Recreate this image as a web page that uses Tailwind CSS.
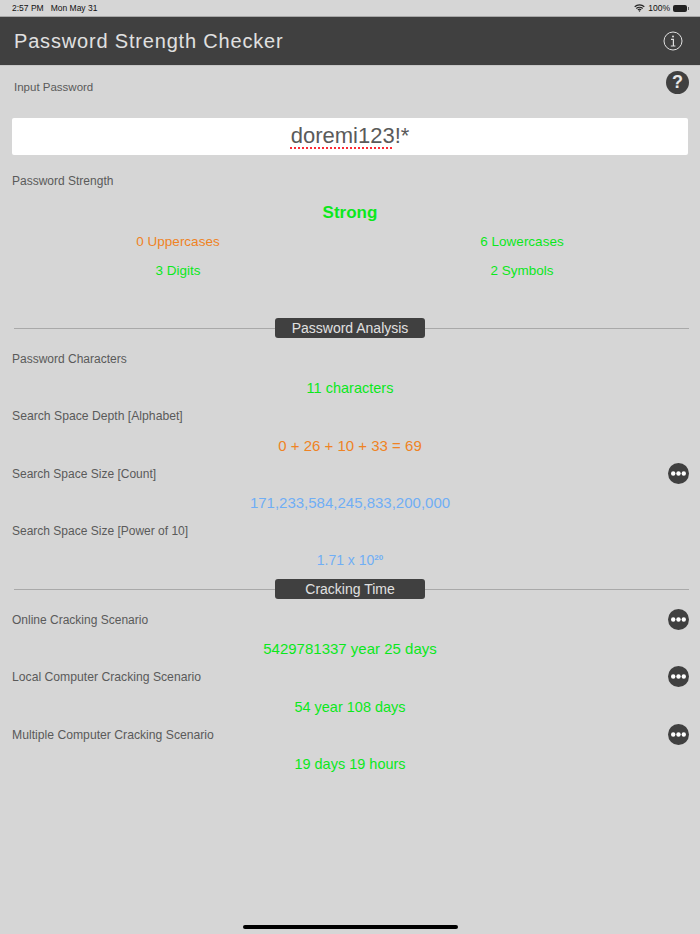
<!DOCTYPE html>
<html lang="en">
<head>
  <meta charset="UTF-8">
  <meta name="viewport" content="width=device-width, initial-scale=1.0">
  <title>Password Strength Checker</title>
  <script src="https://cdn.jsdelivr.net/npm/@tailwindcss/browser@4"></script>
</head>
<body class="bg-[#d6d6d6] text-[#5a5a5a] font-['Liberation_Sans',Arial,sans-serif] w-[700px] h-[934px] overflow-hidden relative">
  <!-- Status bar -->
  <div class="h-[17px] flex items-center justify-between pl-[12px] pr-[11px] text-[8.5px] font-medium text-[#111111] border-b border-[#a8a8a8]">
    <div class="flex gap-[7px]"><span>2:57 PM</span><span>Mon May 31</span></div>
    <div class="flex items-center gap-[3px]">
      <svg width="11" height="8" viewBox="0 0 11 8" fill="none" stroke="#222" stroke-width="1.2">
        <path d="M.7 2.8a7 7 0 0 1 9.6 0M2.3 4.5a4.7 4.7 0 0 1 6.4 0M3.9 6a2.3 2.3 0 0 1 3.2 0"/>
        <circle cx="5.5" cy="7" r=".7" fill="#222" stroke="none"/>
      </svg>
      <span>100%</span>
      <div class="flex items-center gap-px">
        <div class="w-[14px] h-[7px] bg-[#222222] rounded-[2px]"></div>
        <div class="w-px h-[3px] bg-[#666666]"></div>
      </div>
    </div>
  </div>

  <!-- Nav bar -->
  <header class="h-[49px] bg-[#404040] flex items-center justify-between pl-[14px] pr-[17px] border-b border-[#c8c8c8]">
    <h1 class="text-[20px] tracking-[0.82px] text-[#e0e0e0]">Password Strength Checker</h1>
    <svg width="20" height="20" viewBox="0 0 20 20" fill="none" stroke="#e0e0e0">
      <circle cx="10" cy="10" r="9" stroke-width="1"/>
      <circle cx="10" cy="5.6" r="1" fill="#e0e0e0" stroke="none"/>
      <path d="M8 8.4h2.4v6.4M7.8 15h4.6" stroke-width="1.2"/>
    </svg>
  </header>

  <main class="flex flex-col">
    <div class="h-[41px] flex items-center justify-between pl-[14px] pr-[11px] text-[11.5px]">
      <span class="pt-[2px]">Input Password</span>
      <div class="w-[23px] h-[23px] rounded-full bg-[#404040] text-[#e8e8e8] text-[18px] font-bold flex items-center justify-center -mt-[8px]">?</div>
    </div>

    <div class="mx-[12px] h-[37px] mt-[11px] pb-[2px] bg-white rounded-[2px] flex items-center justify-center text-[22px]">
      <span class="underline decoration-dotted decoration-red-500 decoration-[1.5px] underline-offset-[4px]">doremi123</span><span>!*</span>
    </div>

    <div class="h-[26px] mt-[13px] pl-[12px] flex items-center text-[12px]">Password Strength</div>
    <div class="h-[30px] mt-[3px] pt-[2px] flex items-center justify-center text-[17px] font-bold text-[#0be81c]">Strong</div>
    <div class="grid grid-cols-2 auto-rows-[29px] items-center text-center text-[13.5px] px-[6px] pt-[1px]">
      <span class="text-[#ef8324]">0 Uppercases</span>
      <span class="text-[#0be81c]">6 Lowercases</span>
      <span class="text-[#0be81c]">3 Digits</span>
      <span class="text-[#0be81c]">2 Symbols</span>
    </div>

    <!-- Password Analysis -->
    <div class="h-[20px] mt-[32px] relative flex justify-center">
      <div class="absolute left-[14px] right-[11px] top-[10px] h-px bg-[#a9a9a9]"></div>
      <div class="relative w-[150px] h-[20px] rounded-[3px] bg-[#404040] text-[#e0e0e0] text-[14px] flex items-center justify-center">Password Analysis</div>
    </div>

    <div class="h-[28px] mt-[6px] pt-[2px] pl-[12px] flex items-center text-[12px]">Password Characters</div>
    <div class="h-[29.5px] pt-[4px] flex items-center justify-center text-[14.5px] text-[#0be81c]">11 characters</div>

    <div class="h-[28px] pt-[1px] pl-[12px] flex items-center text-[12.2px]">Search Space Depth [Alphabet]</div>
    <div class="h-[29.5px] pt-[3.5px] flex items-center justify-center text-[15px] text-[#ef8324]">0 + 26 + 10 + 33 = 69</div>

    <div class="h-[28px] pl-[12px] pr-[11px] flex items-center justify-between text-[12px]">
      <span class="pt-[2px]">Search Space Size [Count]</span>
      <svg width="21" height="21" viewBox="0 0 21 21"><circle cx="10.5" cy="10.5" r="10.5" fill="#404040"/><circle cx="5.2" cy="10.5" r="2.2" fill="#fff"/><circle cx="10.5" cy="10.5" r="2.2" fill="#fff"/><circle cx="15.8" cy="10.5" r="2.2" fill="#fff"/></svg>
    </div>
    <div class="h-[29.5px] pt-[2.5px] flex items-center justify-center text-[15px] text-[#70aef5]">171,233,584,245,833,200,000</div>

    <div class="h-[28px] pl-[12px] flex items-center text-[12px]">Search Space Size [Power of 10]</div>
    <div class="h-[29.5px] pt-[2.5px] flex items-center justify-center text-[14px] text-[#70aef5]"><span>1.71 x 10<sup class="text-[8px] font-bold -top-[5px]">20</sup></span></div>

    <!-- Cracking Time -->
    <div class="h-[20px] mt-[5px] relative flex justify-center">
      <div class="absolute left-[14px] right-[11px] top-[10px] h-px bg-[#a9a9a9]"></div>
      <div class="relative w-[150px] h-[20px] rounded-[3px] bg-[#404040] text-[#e0e0e0] text-[14px] flex items-center justify-center">Cracking Time</div>
    </div>

    <div class="h-[28px] mt-[6px] pl-[12px] pr-[11px] flex items-center justify-between text-[12px]">
      <span class="pt-[2px]">Online Cracking Scenario</span>
      <svg width="21" height="21" viewBox="0 0 21 21"><circle cx="10.5" cy="10.5" r="10.5" fill="#404040"/><circle cx="5.2" cy="10.5" r="2.2" fill="#fff"/><circle cx="10.5" cy="10.5" r="2.2" fill="#fff"/><circle cx="15.8" cy="10.5" r="2.2" fill="#fff"/></svg>
    </div>
    <div class="h-[29.5px] pt-[2.5px] flex items-center justify-center text-[15px] text-[#0be81c]">5429781337 year 25 days</div>

    <div class="h-[28px] pl-[12px] pr-[11px] flex items-center justify-between text-[12.2px]">
      <span class="pt-[1px]">Local Computer Cracking Scenario</span>
      <svg width="21" height="21" viewBox="0 0 21 21"><circle cx="10.5" cy="10.5" r="10.5" fill="#404040"/><circle cx="5.2" cy="10.5" r="2.2" fill="#fff"/><circle cx="10.5" cy="10.5" r="2.2" fill="#fff"/><circle cx="15.8" cy="10.5" r="2.2" fill="#fff"/></svg>
    </div>
    <div class="h-[29.5px] pt-[4.5px] flex items-center justify-center text-[14.5px] text-[#0be81c]">54 year 108 days</div>

    <div class="h-[28px] pl-[12px] pr-[11px] flex items-center justify-between text-[12.2px]">
      <span class="pt-[2px]">Multiple Computer Cracking Scenario</span>
      <svg width="21" height="21" viewBox="0 0 21 21"><circle cx="10.5" cy="10.5" r="10.5" fill="#404040"/><circle cx="5.2" cy="10.5" r="2.2" fill="#fff"/><circle cx="10.5" cy="10.5" r="2.2" fill="#fff"/><circle cx="15.8" cy="10.5" r="2.2" fill="#fff"/></svg>
    </div>
    <div class="h-[29.5px] pt-[3.5px] flex items-center justify-center text-[14.5px] text-[#0be81c]">19 days 19 hours</div>
  </main>

  <!-- Home indicator -->
  <div class="absolute left-[243px] bottom-[5px] w-[215px] h-[4px] rounded-full bg-black"></div>
</body>
</html>
